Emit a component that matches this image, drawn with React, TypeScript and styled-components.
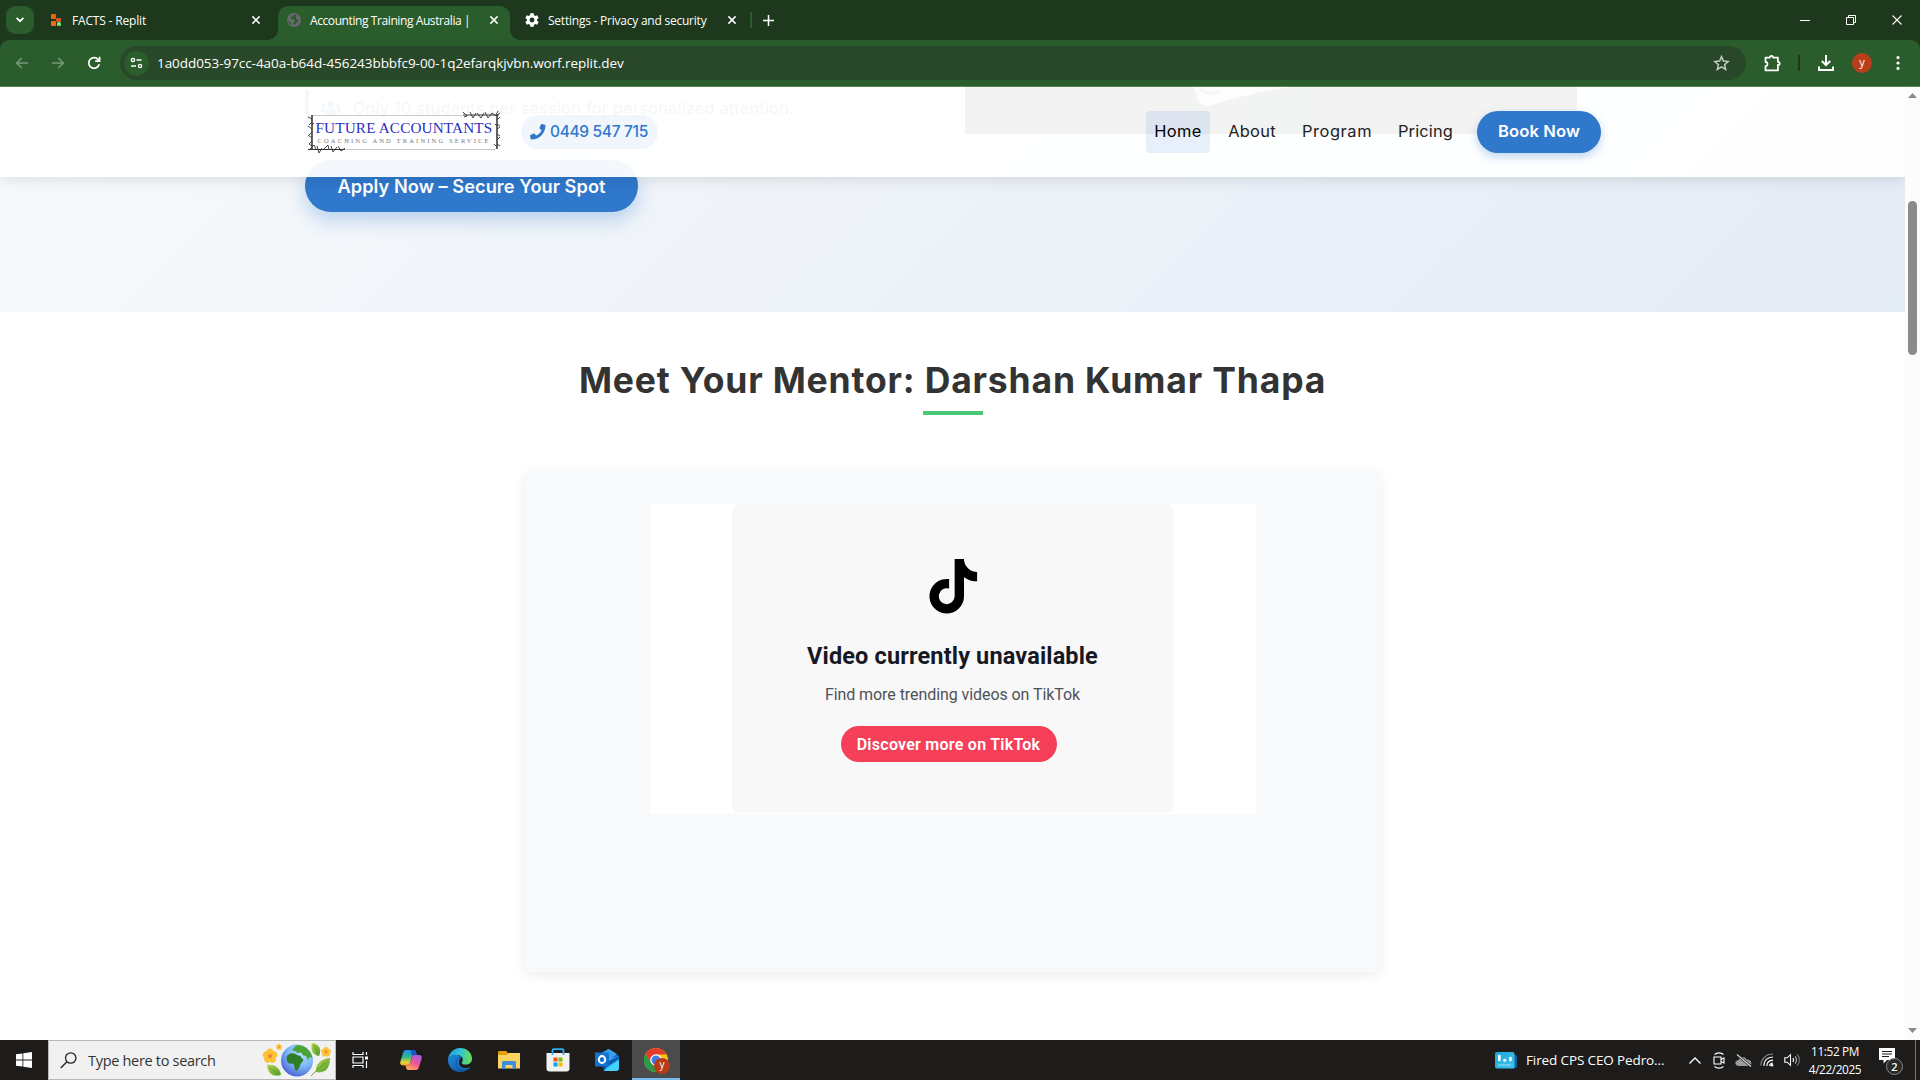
import React from "react";
import styled, { createGlobalStyle, css } from "styled-components";
import { FaPhone, FaTiktok, FaUsers } from "react-icons/fa";

const uiFont = '"Open Sans", "Noto Sans", sans-serif';
const siteFont = 'Inter, "Open Sans", sans-serif';
const tiktokFont = 'Roboto, "Liberation Sans", sans-serif';

const GlobalStyle = createGlobalStyle`
  * { box-sizing: border-box; }
  body { margin: 0; background: #fff; overflow: hidden; }
  svg { display: block; flex: none; overflow: visible; }
`;

const Screen = styled.div`
  display: flex;
  flex-direction: column;
  width: 1920px;
  height: 1080px;
  overflow: hidden;
  font-family: ${uiFont};
`;

/* ---------- Browser chrome ---------- */

const TabStrip = styled.div`
  display: flex;
  height: 40px;
  background: #1d381c;
  color: #fff;
`;

const TabMenuButton = styled.div`
  display: grid;
  place-items: center;
  width: 28px;
  height: 28px;
  margin: 6px 8px 0 6px;
  border-radius: 9px;
  background: #2b5c2b;
`;

const Tab = styled.div<{ $active?: boolean; $width: number; $end?: number }>`
  position: relative;
  display: flex;
  align-items: center;
  width: ${(p) => p.$width}px;
  height: 34px;
  margin-top: 6px;
  padding: 0 ${(p) => p.$end ?? 10}px 6px 8px;
  ${(p) =>
    p.$active &&
    css`
      background: #2b5c2b;
      border-radius: 10px 10px 0 0;
      &::before,
      &::after {
        content: "";
        position: absolute;
        bottom: 0;
        width: 10px;
        height: 10px;
      }
      &::before {
        left: -10px;
        background: radial-gradient(circle at 0 0, transparent 9.5px, #2b5c2b 10px);
      }
      &::after {
        right: -10px;
        background: radial-gradient(circle at 100% 0, transparent 9.5px, #2b5c2b 10px);
      }
    `}
`;

const TabTitle = styled.span<{ $spacing: number; $gap?: number }>`
  flex: 1;
  margin-left: ${(p) => p.$gap ?? 8}px;
  padding-top: 2px;
  white-space: nowrap;
  font-size: 12px;
  line-height: 18px;
  letter-spacing: ${(p) => p.$spacing}px;
`;

const TabClose = styled.span`
  display: grid;
  place-items: center;
  width: 12px;
`;

const TabDivider = styled.div`
  width: 2px;
  height: 16px;
  margin: 12px 10px 0 0;
  background: #2b5c2b;
`;

const NewTab = styled.div`
  display: grid;
  place-items: center;
  width: 12px;
  height: 40px;
`;

const WindowButtons = styled.div`
  display: flex;
  align-items: center;
  height: 40px;
  margin-left: auto;
`;

const WindowButton = styled.div`
  display: grid;
  place-items: center;
  width: 46px;
`;

const ToolbarBack = styled.div`
  background: #1d381c;
`;

const Toolbar = styled.div`
  display: flex;
  align-items: center;
  height: 47px;
  border-bottom: 1px solid #5a8158;
  border-radius: 9px 9px 0 0;
  background: #2b5c2b;
`;

const ToolButton = styled.div<{ $width: number }>`
  display: grid;
  flex: none;
  place-items: center;
  width: ${(p) => p.$width}px;
`;

const AddressBar = styled.div`
  display: flex;
  flex: none;
  align-items: center;
  width: 1626px;
  height: 34px;
  margin-left: 4px;
  padding: 0 16px 0 4px;
  border-radius: 17px;
  background: #29482a;
`;

const SiteChip = styled.div`
  display: grid;
  place-items: center;
  width: 25px;
  height: 25px;
  border-radius: 50%;
  background: #2b5c2b;
`;

const Url = styled.span`
  flex: 1;
  margin-left: 8px;
  color: #fff;
  font-size: 13.5px;
  letter-spacing: -0.055px;
  white-space: nowrap;
`;

const ToolDivider = styled.div`
  flex: none;
  width: 2px;
  height: 16px;
  background: #1d381c;
`;

const ProfileBadge = styled.span`
  width: 20px;
  height: 20px;
  border-radius: 50%;
  background: #b93f1c;
  color: #fff;
  font-size: 11px;
  line-height: 18px;
  text-align: center;
`;

/* ---------- Web page ---------- */

const Viewport = styled.div`
  display: flex;
  height: 953px;
`;

const Page = styled.main`
  position: relative;
  width: 1905px;
  overflow: hidden;
  background: #fff;
  font-family: ${siteFont};
`;

const Navbar = styled.header`
  position: absolute;
  inset: 0 0 auto 0;
  z-index: 2;
  height: 90px;
  background: rgba(255, 255, 255, 0.95);
  box-shadow: 0 2px 15px rgba(0, 0, 0, 0.12);
`;

const NavInner = styled.div`
  display: flex;
  align-items: center;
  width: 1296px;
  height: 90px;
  margin-left: 305px;
`;

const Logo = styled.div`
  position: relative;
  width: 193px;
  height: 38px;
  margin-left: 3px;
  white-space: nowrap;
  font-family: "Liberation Serif", "Times New Roman", serif;
`;

const LogoFrame = styled.svg`
  position: absolute;
  inset: 0;
`;

const LogoName = styled.div`
  margin: 8px 0 0 7.5px;
  color: #2a2fc0;
  font-size: 15.2px;
  line-height: 14px;
  letter-spacing: 0.17px;
`;

const LogoTagline = styled.div`
  margin: 2px 0 0 9.5px;
  color: #777;
  font-size: 6.5px;
  line-height: 8px;
  letter-spacing: 2.15px;
`;

const PhonePill = styled.div`
  display: flex;
  align-items: center;
  width: 137px;
  height: 34px;
  margin-left: 20px;
  padding: 0 0 1px 9px;
  gap: 4.5px;
  border-radius: 17px;
  background: #f1f6fd;
  color: #2f78cc;
  font-size: 15.5px;
  font-weight: 500;
  letter-spacing: -0.33px;
  white-space: nowrap;
`;

const NavLinks = styled.nav`
  display: flex;
  align-items: center;
  gap: 10px;
  margin-left: auto;
`;

const NavLink = styled.a<{ $active?: boolean; $width: number; $spacing: number }>`
  width: ${(p) => p.$width}px;
  height: 42px;
  border-radius: 4px;
  background: ${(p) => (p.$active ? "rgba(47, 110, 210, 0.11)" : "transparent")};
  color: ${(p) => (p.$active ? "#000" : "#222")};
  font-size: 16.4px;
  font-weight: 400;
  line-height: 41px;
  letter-spacing: ${(p) => p.$spacing}px;
  text-align: center;
`;

const BookButton = styled.a`
  width: 124px;
  height: 42px;
  margin-left: 6px;
  border-radius: 21px;
  background: #2f78cc;
  box-shadow: 0 4px 10px rgba(47, 120, 204, 0.3);
  color: #fff;
  font-size: 16.6px;
  font-weight: 600;
  line-height: 41px;
  letter-spacing: 0.1px;
  text-align: center;
`;

const Hero = styled.section`
  height: 225px;
  background: linear-gradient(135deg, #fdfefe, #e3ebf5) bottom / 100% 750px no-repeat;
`;

const HeroInner = styled.div`
  display: flex;
  justify-content: space-between;
  width: 1272px;
  margin-left: 305px;
`;

const HeroCopy = styled.div`
  display: flex;
  flex-direction: column;
  width: 560px;
  padding-top: 3px;
`;

const Feature = styled.div`
  display: flex;
  align-items: center;
  height: 39px;
  padding: 0 0 3px 12px;
  border-left: 4px solid #2f78cc;
  color: #444;
  font-size: 16px;
  letter-spacing: 0.387px;
  white-space: nowrap;
  gap: 12px;
`;

const ApplyButton = styled.a`
  width: 333px;
  height: 52px;
  margin-top: 31px;
  border-radius: 26px;
  background: #2f78cc;
  box-shadow: 0 8px 20px rgba(47, 120, 204, 0.3);
  color: #fff;
  font-size: 18.2px;
  font-weight: 600;
  line-height: 52px;
  letter-spacing: 0.05px;
  text-align: center;
`;

const HeroPhoto = styled.div`
  width: 612px;
  height: 47px;
  background: linear-gradient(90deg, #2b2320, #101512 40%, #18231e);
`;

const MentorSection = styled.section`
  display: flex;
  flex-direction: column;
  align-items: center;
  padding-top: 45px;
`;

const MentorTitle = styled.h2`
  margin: 0;
  color: #333;
  font-size: 35.5px;
  font-weight: 700;
  line-height: 48px;
  letter-spacing: 0.82px;
  white-space: nowrap;
`;

const TitleRule = styled.div`
  width: 60px;
  height: 4px;
  margin-top: 6px;
  background: #48c774;
`;

const VideoCard = styled.div`
  display: flex;
  justify-content: center;
  align-items: flex-start;
  width: 857px;
  height: 502px;
  margin-top: 55px;
  padding-top: 34px;
  border-radius: 8px;
  background: #f8f9fb;
  box-shadow: 0 4px 12px rgba(0, 0, 0, 0.07);
`;

const Embed = styled.div`
  display: flex;
  justify-content: center;
  width: 606px;
  height: 310px;
  background: #fff;
`;

const EmbedPanel = styled.div`
  display: flex;
  flex-direction: column;
  align-items: center;
  width: 442px;
  height: 309px;
  padding-top: 55px;
  border-radius: 8px;
  background: #f8f8f8;
  font-family: ${tiktokFont};
  white-space: nowrap;
`;

const EmbedLogo = styled(FaTiktok)`
  margin-left: 2px;
  color: #000;
`;

const EmbedTitle = styled.div`
  margin-top: 26px;
  color: #161823;
  font-size: 23.5px;
  font-weight: 700;
  line-height: 32px;
  letter-spacing: 0.15px;
`;

const EmbedText = styled.div`
  margin-top: 12px;
  color: #505159;
  font-size: 16px;
  line-height: 22px;
  letter-spacing: -0.07px;
`;

const EmbedButton = styled.div`
  width: 216px;
  height: 36px;
  margin: 20px 8px 0 0;
  border-radius: 18px;
  background: #f6405a;
  color: #fff;
  font-size: 16px;
  font-weight: 600;
  line-height: 37px;
  letter-spacing: 0.26px;
  text-align: center;
`;

const ScrollTrack = styled.div`
  display: flex;
  flex-direction: column;
  align-items: center;
  width: 15px;
  padding: 6px 0 7px;
  background: #fcfcfc;
`;

const ScrollThumb = styled.div`
  width: 9px;
  height: 154px;
  margin: 103px 0 auto;
  border-radius: 5px;
  background: #8b8b8b;
`;

/* ---------- Taskbar ---------- */

const Taskbar = styled.footer`
  display: flex;
  align-items: center;
  height: 40px;
  background: #1d1c1b;
  color: #fff;
`;

const TaskButton = styled.div<{ $width: number; $active?: boolean }>`
  display: grid;
  place-items: center;
  width: ${(p) => p.$width}px;
  height: 40px;
  ${(p) =>
    p.$active &&
    css`
      background: #4c4b4b;
      box-shadow: inset 0 -2px #76b9ed;
    `}
`;

const SearchBox = styled.div`
  display: flex;
  align-items: center;
  width: 288px;
  height: 40px;
  padding: 0 3px 0 11px;
  border: 1px solid #b8b8b8;
  background: #f1f1f1;
`;

const SearchLabel = styled.span`
  flex: 1;
  margin-left: 11px;
  color: #333;
  font-size: 14.5px;
  letter-spacing: -0.31px;
`;

const Tray = styled.div`
  display: flex;
  align-items: center;
  height: 40px;
  margin-left: auto;
`;

const NewsLabel = styled.span`
  width: 157px;
  margin-left: 9px;
  font-size: 13.5px;
  letter-spacing: -0.12px;
  white-space: nowrap;
`;

const Clock = styled.div`
  width: 60px;
  font-size: 11.8px;
  line-height: 18px;
  letter-spacing: -0.38px;
  text-align: center;
`;

const ShowDesktop = styled.div`
  width: 5px;
  height: 40px;
  border-left: 1px solid #777;
`;

/* ---------- Drawings ---------- */

const CloseIcon = ({ size = 8, stroke = 1.5 }: { size?: number; stroke?: number }) => (
  <svg width={size} height={size} viewBox="0 0 8 8" stroke="#fff" strokeWidth={stroke} fill="none">
    <path d="M.4.4l7.2 7.2M7.6.4L.4 7.6" />
  </svg>
);

const ReplitIcon = () => (
  <svg width="13" height="14" viewBox="0 0 13 14">
    <rect x="1" y="1" width="5" height="5" rx="1" fill="#f26207" />
    <rect x="6" y="5" width="5" height="4" rx="1" fill="#d9541a" />
    <rect x="1" y="8" width="5" height="5" rx="1" fill="#f26a14" />
    <rect x="7" y="9" width="4" height="4" rx="1.5" fill="#6fe87c" />
  </svg>
);

const GlobeIcon = () => (
  <svg width="16" height="16" viewBox="0 0 16 16">
    <circle cx="8" cy="8" r="7" fill="#666a6f" />
    <path d="M8.500 2.200L7.300 3.500l-1 .5v1.300H5L4.300 7h3l1.300 1.200v1.700l-1.400 1v2.200l2.600-1.200 1-1.800 1.400-.8.500-1.500-1.900-.4L9.800 6V4.700l1.300-1z" fill="#2b5c2b" />
    <path d="M1.800 8.200l2.700 2.200 1 2.600-2.200-1.200z" fill="#2b5c2b" />
  </svg>
);

const GearIcon = () => (
  <svg width="16" height="16" viewBox="0 0 24 24" fill="#fff">
    <path
      fillRule="evenodd"
      d="M19.600 13.100a7.600 7.600 0 0 0 0-2.200l2.400-1.900-2.300-4-2.800 1.100a7.500 7.500 0 0 0-1.900-1.100L14.500 2h-5L9 5a7.500 7.500 0 0 0-1.900 1.100L4.300 5 2 9l2.400 1.900a7.600 7.600 0 0 0 0 2.200L2 15l2.300 4 2.800-1.100A7.500 7.500 0 0 0 9 19l.5 3h5l.5-3a7.500 7.500 0 0 0 1.900-1.100l2.800 1.100 2.300-4zM12 15.700a3.700 3.700 0 1 1 0-7.400 3.700 3.700 0 0 1 0 7.400z"
    />
  </svg>
);

const ArrowIcon = ({ flip }: { flip?: boolean }) => (
  <svg width="14" height="12" viewBox="0 0 14 12" fill="none" stroke="#78987a" strokeWidth="1.6">
    <path d={flip ? "M1 6h11M7.200 1l5.200 5-5.200 5" : "M13 6H2M6.800 1L1.600 6l5.200 5"} />
  </svg>
);

const ReloadIcon = () => (
  <svg width="14" height="14" viewBox="0 0 14 14" fill="none" stroke="#fff" strokeWidth="1.7">
    <path d="M12.200 8.200A5.300 5.300 0 1 1 11 3.400l1 1.100" />
    <path d="M12.600.8v4.400H8.200" />
  </svg>
);

const TuneIcon = () => (
  <svg width="13" height="12" viewBox="0 0 13 12" fill="none" stroke="#fff" strokeWidth="1.4">
    <circle cx="3" cy="3" r="1.6" />
    <path d="M6.500 3h5M1 9h5" />
    <circle cx="10" cy="9" r="1.6" />
  </svg>
);

const StarIcon = () => (
  <svg width="17" height="16" viewBox="0 0 24 23" fill="none" stroke="#c3cdc3" strokeWidth="2.1">
    <path d="M12 2.300l2.700 6.400 6.900.6-5.200 4.600 1.600 6.800-6-3.600-6 3.600 1.600-6.800L2.400 9.300l6.900-.6z" />
  </svg>
);

const PuzzleIcon = () => (
  <svg width="18" height="18" viewBox="0 0 18 18" fill="none" stroke="#fff" strokeWidth="1.8" strokeLinejoin="round">
    <path d="M2.500 3.600h4.400C6.900 1.200 10.100 1.200 10.100 3.600h4.800v4.200c2.400 0 2.400 3.200 0 3.200v5.400H2.500v-4.200c2.600 0 2.600-4.200 0-4.200z" />
  </svg>
);

const DownloadIcon = () => (
  <svg width="18" height="18" viewBox="0 0 18 18" fill="none" stroke="#fff" strokeWidth="2">
    <path d="M9 1v10M4.800 7L9 11.200 13.200 7M2 12.500V16h14v-3.500" />
  </svg>
);

const KebabIcon = () => (
  <svg width="4" height="16" viewBox="0 0 4 16" fill="#fff">
    <circle cx="2" cy="2.6" r="1.6" />
    <circle cx="2" cy="8" r="1.6" />
    <circle cx="2" cy="13.4" r="1.6" />
  </svg>
);

const LogoDrawing = () => (
  <LogoFrame width="193" height="38" viewBox="0 0 193 38" fill="none">
    <path d="M4 2.500h150M38 36.500h149" stroke="#c9c9c9" />
    <path d="M4 2v34M189 2v34" stroke="#222" strokeWidth="1.4" />
    <path d="M155 2h36M0 36.500h37" stroke="#333" />
    <path
      d="M155-1l4 4-3 1M162-1l3 6 3-5M169 0l4 5 3-5M177-1l3 6 4-5M184 0l4 3 4-3M190-2l-2 4M2 36l4-4 2 4M9 33l2 7 3-5M16 36l4-4 1 5M23 33l2 6 4-5M30 33l3 5 4-3M4 6L0 4M4 9l-3 3M4 16l-4-3M4 19l-3 3M4 25l-4-3M4 28l-3 3M4 33l-3-2M4 12l2-2M189 7l3-3M189 11l3 2M189 16l3-2M189 21l3 2M189 27l3-3M189 31l3 2M189 34l-3-3M189 13l-2-2"
      stroke="#333"
      strokeWidth=".9"
    />
  </LogoFrame>
);

const WindowsIcon = () => (
  <svg width="16" height="16" viewBox="0 0 16 16" fill="#fff">
    <path d="M0 2.300l6.500-.9v6.200H0zM7.300 1.300L16 0v7.600H7.300zM0 8.400h6.500v6.200L0 13.700zM7.300 8.400H16V16l-8.700-1.300z" />
  </svg>
);

const SearchIcon = () => (
  <svg width="17" height="17" viewBox="0 0 17 17" fill="none" stroke="#222" strokeWidth="1.3">
    <circle cx="10.7" cy="6" r="5.2" />
    <path d="M7 9.700L.7 16" />
  </svg>
);

const petals = [0, 72, 144, 216, 288];

const Flower = ({ x, y, s }: { x: number; y: number; s: number }) => (
  <g transform={`translate(${x} ${y}) scale(${s})`}>
    {petals.map((a) => (
      <ellipse key={a} cx="0" cy="-4.1" rx="3.5" ry="3.8" fill="#fec533" stroke="#f7ae26" strokeWidth=".4" transform={`rotate(${a})`} />
    ))}
    <circle r="2.3" fill="#f5843b" />
  </g>
);

const EarthArt = () => (
  <svg width="70" height="36" viewBox="0 0 70 36">
    <defs>
      <radialGradient id="ocean" cx=".65" cy=".25" r=".9">
        <stop offset="0" stopColor="#b4e2ff" />
        <stop offset=".5" stopColor="#7cb5f8" />
        <stop offset="1" stopColor="#3d49c8" />
      </radialGradient>
      <linearGradient id="leaf" x1="0" y1="0" x2="1" y2="1">
        <stop offset="0" stopColor="#b6d84a" />
        <stop offset="1" stopColor="#4f9a26" />
      </linearGradient>
    </defs>
    <path d="M5 23c6-1 13 2 14 10-8 2-13-1-14-10z" fill="url(#leaf)" />
    <path d="M50 1c7 1 10 6 7 13-6-1-9-6-7-13z" fill="url(#leaf)" />
    <path d="M68 16c0 10-5 16-14 14-1-8 5-13 14-14z" fill="url(#leaf)" />
    <path d="M49 34c3-3 8-8 14-13" stroke="#4c8c22" fill="none" strokeWidth=".8" />
    <path d="M7 25l8 6M52 3l4 9" stroke="#4c8c22" fill="none" strokeWidth=".6" />
    <circle cx="35" cy="18.5" r="16" fill="url(#ocean)" />
    <path d="M24.500 15c1.500-3.500 6-4.500 9-3l2.500 1.500 2.500.5c.5 2 2 3 3 3.500-1 3-3.500 4-3.500 6.500l-2.500 4.500c-2 1-3-1-3-3.500l-1-3.500c-3 .5-6 0-6.500-2.500z" fill="#2f7d26" />
    <path d="M30 8l4-4.500c4-1 9 0 12.500 4.500 2 2.500 3.500 5.500 4 8l-3-1-1.500 3-2-4-2.500-.5-2.500-3-3.500.5-2-1.500z" fill="#4da334" />
    <Flower x={8} y={14} s={0.92} />
    <Flower x={17} y={5} s={0.38} />
    <Flower x={64} y={10} s={0.62} />
  </svg>
);

const TaskViewIcon = () => (
  <svg width="17" height="16" viewBox="0 0 17 16" fill="none" stroke="#fff" strokeWidth="1.2">
    <path d="M1 0v2.500h10V0M1 16v-2.500h10V16M1 5h10v6H1zM14.500 0v3M14.500 9v7" />
    <path d="M13 4.500h3v3h-3z" fill="#fff" stroke="none" />
  </svg>
);

const CopilotIcon = () => (
  <svg width="22" height="20" viewBox="0 0 22 20">
    <defs>
      <linearGradient id="copA" x1="0" y1="0" x2="0" y2="1">
        <stop offset="0" stopColor="#1c8fe8" />
        <stop offset=".45" stopColor="#2fb58d" />
        <stop offset=".8" stopColor="#e3d531" />
        <stop offset="1" stopColor="#f59b2c" />
      </linearGradient>
      <linearGradient id="copB" x1=".8" y1="0" x2=".2" y2="1">
        <stop offset="0" stopColor="#a45be8" />
        <stop offset=".5" stopColor="#ee5594" />
        <stop offset="1" stopColor="#ffb057" />
      </linearGradient>
    </defs>
    <path d="M6 0h7.500c1.600 0 2 1 2.500 2.500L16.700 5h-2.200c-1.700 0-2.300.8-2.800 2.500L10 13.200C9.400 15 8.800 15.500 7 15.500H3.300C.8 15.500-.3 14 .4 11.500L3 3C3.600 1 4.300 0 6 0z" fill="url(#copA)" />
    <path d="M10.500 0h3c1.600 0 2 1 2.500 2.500L16.700 5h-2.200c-1.200 0-1.900.4-2.300 1.300z" fill="#1b57c6" />
    <path d="M16 20H8.500c-1.600 0-2-1-2.500-2.500L5.400 15.500h1.900c1.700 0 2.400-.8 2.900-2.500L12 7.200C12.500 5.400 13.200 5 15 5h3.700c2.500 0 3.600 1.500 2.900 4L19 17c-.6 2-1.300 3-3 3z" fill="url(#copB)" />
  </svg>
);

const EdgeIcon = () => (
  <svg width="24" height="24" viewBox="0 0 24 24">
    <defs>
      <linearGradient id="edgeA" x1="0" y1=".3" x2="1" y2=".4">
        <stop offset="0" stopColor="#2497e3" />
        <stop offset=".5" stopColor="#2fc3d6" />
        <stop offset="1" stopColor="#6be04e" />
      </linearGradient>
      <linearGradient id="edgeB" x1="0" y1="0" x2="1" y2="1">
        <stop offset="0" stopColor="#1b8fdd" />
        <stop offset="1" stopColor="#0d4a98" />
      </linearGradient>
    </defs>
    <path d="M0 12C.3 5 5.500 0 12 0c7 0 12 5 12 10.500 0 4-3 6-6.300 6-3 0-4-1-4-1.800 0-.7 1.100-1.200 1.100-3C14.800 9 12 7 8.600 7 4 7 1 9.500 0 12z" fill="url(#edgeA)" />
    <path d="M0 12C1 9 4.200 7 8.600 7c2.400 0 4 1 4.900 2-3 .3-5 2.700-5 5.500 0 4 3.500 7.300 8 7.300 2.300 0 4.200-.8 5.500-1.700C20 22.500 16.500 24 12 24 5.500 24-.2 18.500 0 12z" fill="url(#edgeB)" />
    <path d="M8.500 14.500c0 4 3.500 7.300 8 7.300 2.300 0 4.200-.8 5.500-1.700.5-.7.200-1-.4-.7-1 .5-2.200.8-3.600.8-4.500 0-7.300-3-7-6 .2-2 1-3.600 2.500-5.200-3 .3-5 2.700-5 5.500z" fill="#1673c5" />
  </svg>
);

const ExplorerIcon = () => (
  <svg width="22" height="18" viewBox="0 0 22 18">
    <path d="M0 1.500C0 .7.500 0 1.300 0h6.500c.6 0 1 .3 1.200.8L9.700 2H22v4H0z" fill="#e3a008" />
    <path d="M0 4h9l1.500-2H22v15.500H0z" fill="#fcd462" />
    <path d="M4 18v-6.500C4 10.600 4.600 10 5.500 10h11c.9 0 1.500.6 1.500 1.500V18h-3.500v-4h-7v4z" fill="#3a8fe0" />
  </svg>
);

const StoreIcon = () => (
  <svg width="24" height="24" viewBox="0 0 24 24">
    <path d="M.5 5h23v15.500c0 2-1 3-3 3h-17c-2 0-3-1-3-3z" fill="#f1f1f1" />
    <path d="M6.500 7V2.500C6.500 1.700 7 1.200 7.800 1.200h8.400c.8 0 1.300.5 1.300 1.300V7" fill="none" stroke="#28b1f0" strokeWidth="1.8" />
    <path d="M7.500 9.500h4v4h-4z" fill="#f25022" />
    <path d="M12.500 9.500h4v4h-4z" fill="#7fba00" />
    <path d="M7.500 14.500h4v4h-4z" fill="#00a4ef" />
    <path d="M12.500 14.500h4v4h-4z" fill="#ffb900" />
  </svg>
);

const OutlookIcon = () => (
  <svg width="24" height="22" viewBox="0 0 24 22">
    <path d="M3 7l10-7 11 7v11c0 2.500-1 4-3.500 4H11z" fill="#1b62c4" />
    <path d="M7 3.500L14 0l8 5-9 7-4-3z" fill="#3aa0ea" />
    <path d="M9 12l15-5v11.500c0 2-1.300 3.500-3.500 3.500H9z" fill="#2bc0f5" />
    <path d="M24 7v3l-12 8-3 4h-.5V12h5z" fill="#0f57b5" />
    <path d="M9 22l15-11v7.500c0 2-1.300 3.500-3.500 3.500z" fill="#43d3fb" />
    <path d="M0 3.500h14v14H0z" fill="#1272cf" />
    <ellipse cx="7" cy="10.5" rx="3.2" ry="3.5" fill="none" stroke="#fff" strokeWidth="1.9" />
  </svg>
);

const ChromeWrap = styled.div`
  position: relative;
`;

const BadgeLetter = styled.span`
  position: absolute;
  right: -2px;
  bottom: -2px;
  width: 16px;
  height: 16px;
  border-radius: 50%;
  background: #b93a15;
  color: #fff;
  font-size: 10px;
  line-height: 13px;
  text-align: center;
`;

const ChromeIcon = () => (
  <ChromeWrap>
    <svg width="24" height="24" viewBox="0 0 24 24">
      <circle cx="12" cy="12" r="12" fill="#fbc116" />
      <path d="M1.600 6A12 12 0 0 1 22.400 6L22.400 6.500H12L7 15z" fill="#e33b2e" />
      <path d="M1.600 6A12 12 0 0 0 12 24l5-9-10 0z" fill="#269a49" />
      <circle cx="12" cy="12" r="5.8" fill="#fff" />
      <circle cx="12" cy="12" r="4.5" fill="#3b7ded" />
    </svg>
    <BadgeLetter>y</BadgeLetter>
  </ChromeWrap>
);

const NewsIcon = () => (
  <svg width="22" height="17" viewBox="0 0 22 17">
    <defs>
      <linearGradient id="news" x1="0" y1="0" x2="1" y2="1">
        <stop offset="0" stopColor="#23a6d8" />
        <stop offset="1" stopColor="#3cc5ea" />
      </linearGradient>
    </defs>
    <path d="M16 3h4.500c1 0 1.500.5 1.500 1.500V14c0 1.500-1 2.500-2.500 2.500H16z" fill="#125fa8" />
    <rect width="19.5" height="16.5" rx="2" fill="url(#news)" />
    <path d="M4.300 4v4M15.500 6v2" stroke="#fff" strokeWidth="2.6" strokeLinecap="round" />
    <circle cx="9.7" cy="8.3" r="1.5" fill="#fff" />
    <path d="M3 13h13" stroke="#9be3f5" strokeWidth="1" />
  </svg>
);

const CaretIcon = () => (
  <svg width="12" height="7" viewBox="0 0 12 7" fill="none" stroke="#fff" strokeWidth="1.3">
    <path d="M.5 6.500L6 1l5.500 5.500" />
  </svg>
);

const MeetIcon = () => (
  <svg width="12" height="17" viewBox="0 0 12 17" fill="none" stroke="#fff" strokeWidth="1.1">
    <path d="M1.500 2.500C4 .3 8 .3 10.500 2.500M1.500 14.500c2.500 2.200 6.500 2.200 9 0M1 5h7v7H1zM8 7.500l3-1.500v5L8 9.500z" />
  </svg>
);

const CloudOffIcon = () => (
  <svg width="17" height="13" viewBox="0 0 17 13">
    <path d="M4 12C-1 12-.5 6 3.500 6.300 4 2.500 10 1.500 11.500 5.500 17 5 18 12 13.500 12z" fill="#9b9b9b" />
    <path d="M2.500 1l13 11" stroke="#1d1c1b" strokeWidth="2.4" />
    <path d="M2 .5l14 12" stroke="#ddd" strokeWidth="1.1" />
  </svg>
);

const WifiIcon = () => (
  <svg width="14" height="14" viewBox="0 0 14 14" fill="none" strokeWidth="1.2">
    <path d="M.8 12.500C1 6 6 1 13 1" stroke="#888" />
    <path d="M3.800 13C4 7.500 7.500 4.200 13 4" stroke="#eee" />
    <path d="M6.800 13c.2-3.600 2.600-5.700 6.200-5.900" stroke="#fff" />
    <path d="M9.500 13c.2-1.700 1.500-2.900 3.500-3" stroke="#fff" />
    <circle cx="12" cy="12.2" r="1.3" fill="#fff" />
  </svg>
);

const SpeakerIcon = () => (
  <svg width="17" height="14" viewBox="0 0 17 14" fill="none" stroke="#fff" strokeWidth="1.1">
    <path d="M.8 4.800h2.400L6.500 1.700v10.600L3.200 9.200H.8z" />
    <path d="M8.800 5.200c.9 1 .9 2.600 0 3.600" />
    <path d="M11 3.300c2 2 2 5.400 0 7.400" stroke="#bbb" />
    <path d="M13.200 1.500c3 3 3 8 0 11" stroke="#777" />
  </svg>
);

const NoticeWrap = styled.div`
  position: relative;
  width: 24px;
  height: 24px;
  margin: 0 12px 0 14px;
`;

const NoticeCount = styled.span`
  position: absolute;
  right: 0;
  bottom: -3px;
  width: 17px;
  height: 17px;
  border: 1px solid #888;
  border-radius: 50%;
  background: #2a2a2a;
  color: #fff;
  font-size: 11px;
  font-weight: 600;
  line-height: 15px;
  text-align: center;
`;

const NoticeIcon = () => (
  <NoticeWrap>
    <svg width="16" height="16" viewBox="0 0 16 16">
      <path d="M0 0h16v12H8l-3.500 3.500V12H0z" fill="#fff" />
      <path d="M3 3.500h10M3 6h10M3 8.500h7" stroke="#1d1c1b" />
    </svg>
    <NoticeCount>2</NoticeCount>
  </NoticeWrap>
);

const ScrollArrow = ({ down }: { down?: boolean }) => (
  <svg width="9" height="5" viewBox="0 0 9 5" fill="#8b8b8b">
    <path d={down ? "M0 0h9L4.500 5z" : "M0 5h9L4.500 0z"} />
  </svg>
);

/* ---------- Sections ---------- */

const BrowserChrome = () => (
  <>
    <TabStrip>
      <TabMenuButton>
        <svg width="8" height="6" viewBox="0 0 8 6" fill="none" stroke="#fff" strokeWidth="1.7">
          <path d="M.6.8L4 4.200 7.400.8" />
        </svg>
      </TabMenuButton>
      <Tab $width={236} $end={16}>
        <ReplitIcon />
        <TabTitle $spacing={-0.175} $gap={9}>FACTS - Replit</TabTitle>
        <TabClose><CloseIcon /></TabClose>
      </Tab>
      <Tab $active $width={232}>
        <GlobeIcon />
        <TabTitle $spacing={-0.41}>Accounting Training Australia |</TabTitle>
        <TabClose><CloseIcon /></TabClose>
      </Tab>
      <Tab $width={240} $end={12}>
        <ToolButton $width={28}><GearIcon /></ToolButton>
        <TabTitle $spacing={-0.23} $gap={2}>Settings - Privacy and security</TabTitle>
        <TabClose><CloseIcon /></TabClose>
      </Tab>
      <TabDivider />
      <NewTab>
        <svg width="11" height="11" viewBox="0 0 11 11" stroke="#fff" strokeWidth="1.5">
          <path d="M5.500 0v11M0 5.500h11" />
        </svg>
      </NewTab>
      <WindowButtons>
        <WindowButton>
          <svg width="10" height="1"><path d="M0 0h10v1H0z" fill="#fff" /></svg>
        </WindowButton>
        <WindowButton>
          <svg width="10" height="10" viewBox="0 0 10 10" fill="none" stroke="#fff">
            <path d="M.5 2.500h7v7h-7zM2.500 2.500v-2h7v7h-2" />
          </svg>
        </WindowButton>
        <WindowButton><CloseIcon size={10} stroke={0.9} /></WindowButton>
      </WindowButtons>
    </TabStrip>
    <ToolbarBack>
      <Toolbar>
        <ToolButton $width={44}><ArrowIcon /></ToolButton>
        <ToolButton $width={28}><ArrowIcon flip /></ToolButton>
        <ToolButton $width={44}><ReloadIcon /></ToolButton>
        <AddressBar>
          <SiteChip><TuneIcon /></SiteChip>
          <Url>1a0dd053-97cc-4a0a-b64d-456243bbbfc9-00-1q2efarqkjvbn.worf.replit.dev</Url>
          <StarIcon />
        </AddressBar>
        <ToolButton $width={52}><PuzzleIcon /></ToolButton>
        <ToolDivider />
        <ToolButton $width={52}><DownloadIcon /></ToolButton>
        <ToolButton $width={20}><ProfileBadge>y</ProfileBadge></ToolButton>
        <ToolButton $width={52}><KebabIcon /></ToolButton>
      </Toolbar>
    </ToolbarBack>
  </>
);

const SiteHeader = () => (
  <Navbar>
    <NavInner>
      <Logo>
        <LogoDrawing />
        <LogoName>FUTURE ACCOUNTANTS</LogoName>
        <LogoTagline>COACHING AND TRAINING SERVICE</LogoTagline>
      </Logo>
      <PhonePill>
        <FaPhone size={15.5} />
        <span>0449 547 715</span>
      </PhonePill>
      <NavLinks>
        <NavLink $active $width={64} $spacing={0.4}>Home</NavLink>
        <NavLink $width={64} $spacing={0.3}>About</NavLink>
        <NavLink $width={86} $spacing={0.6}>Program</NavLink>
        <NavLink $width={71} $spacing={0.15}>Pricing</NavLink>
        <BookButton>Book Now</BookButton>
      </NavLinks>
    </NavInner>
  </Navbar>
);

export default function App() {
  return (
    <Screen>
      <GlobalStyle />
      <BrowserChrome />
      <Viewport>
        <Page>
          <SiteHeader />
          <Hero>
            <HeroInner>
              <HeroCopy>
                <Feature>
                  <FaUsers size={20} color="#2f78cc" />
                  <span>Only 10 students per session for personalized attention.</span>
                </Feature>
                <ApplyButton>Apply Now – Secure Your Spot</ApplyButton>
              </HeroCopy>
              <HeroPhoto>
                <svg width="612" height="47" viewBox="0 0 612 47">
                  <path d="M229 0h95c-30 5-52 11-74 17-9 3-14 3-17-4z" fill="#c9d2cc" />
                  <path d="M236 2c6 6 12 5 18 2" stroke="#333" fill="none" strokeWidth="2" />
                </svg>
              </HeroPhoto>
            </HeroInner>
          </Hero>
          <MentorSection>
            <MentorTitle>Meet Your Mentor: Darshan Kumar Thapa</MentorTitle>
            <TitleRule />
            <VideoCard>
              <Embed>
                <EmbedPanel>
                  <EmbedLogo size={54.5} />
                  <EmbedTitle>Video currently unavailable</EmbedTitle>
                  <EmbedText>Find more trending videos on TikTok</EmbedText>
                  <EmbedButton>Discover more on TikTok</EmbedButton>
                </EmbedPanel>
              </Embed>
            </VideoCard>
          </MentorSection>
        </Page>
        <ScrollTrack>
          <ScrollArrow />
          <ScrollThumb />
          <ScrollArrow down />
        </ScrollTrack>
      </Viewport>
      <Taskbar>
        <TaskButton $width={48}><WindowsIcon /></TaskButton>
        <SearchBox>
          <SearchIcon />
          <SearchLabel>Type here to search</SearchLabel>
          <EarthArt />
        </SearchBox>
        <TaskButton $width={49}><TaskViewIcon /></TaskButton>
        <TaskButton $width={51}><CopilotIcon /></TaskButton>
        <TaskButton $width={48}><EdgeIcon /></TaskButton>
        <TaskButton $width={50}><ExplorerIcon /></TaskButton>
        <TaskButton $width={48}><StoreIcon /></TaskButton>
        <TaskButton $width={50}><OutlookIcon /></TaskButton>
        <TaskButton $width={48} $active><ChromeIcon /></TaskButton>
        <Tray>
          <NewsIcon />
          <NewsLabel>Fired CPS CEO Pedro...</NewsLabel>
          <TaskButton $width={24}><CaretIcon /></TaskButton>
          <TaskButton $width={24}><MeetIcon /></TaskButton>
          <TaskButton $width={24}><CloudOffIcon /></TaskButton>
          <TaskButton $width={24}><WifiIcon /></TaskButton>
          <TaskButton $width={26}><SpeakerIcon /></TaskButton>
          <Clock>
            <div>11:52 PM</div>
            <div>4/22/2025</div>
          </Clock>
          <NoticeIcon />
          <ShowDesktop />
        </Tray>
      </Taskbar>
    </Screen>
  );
}
